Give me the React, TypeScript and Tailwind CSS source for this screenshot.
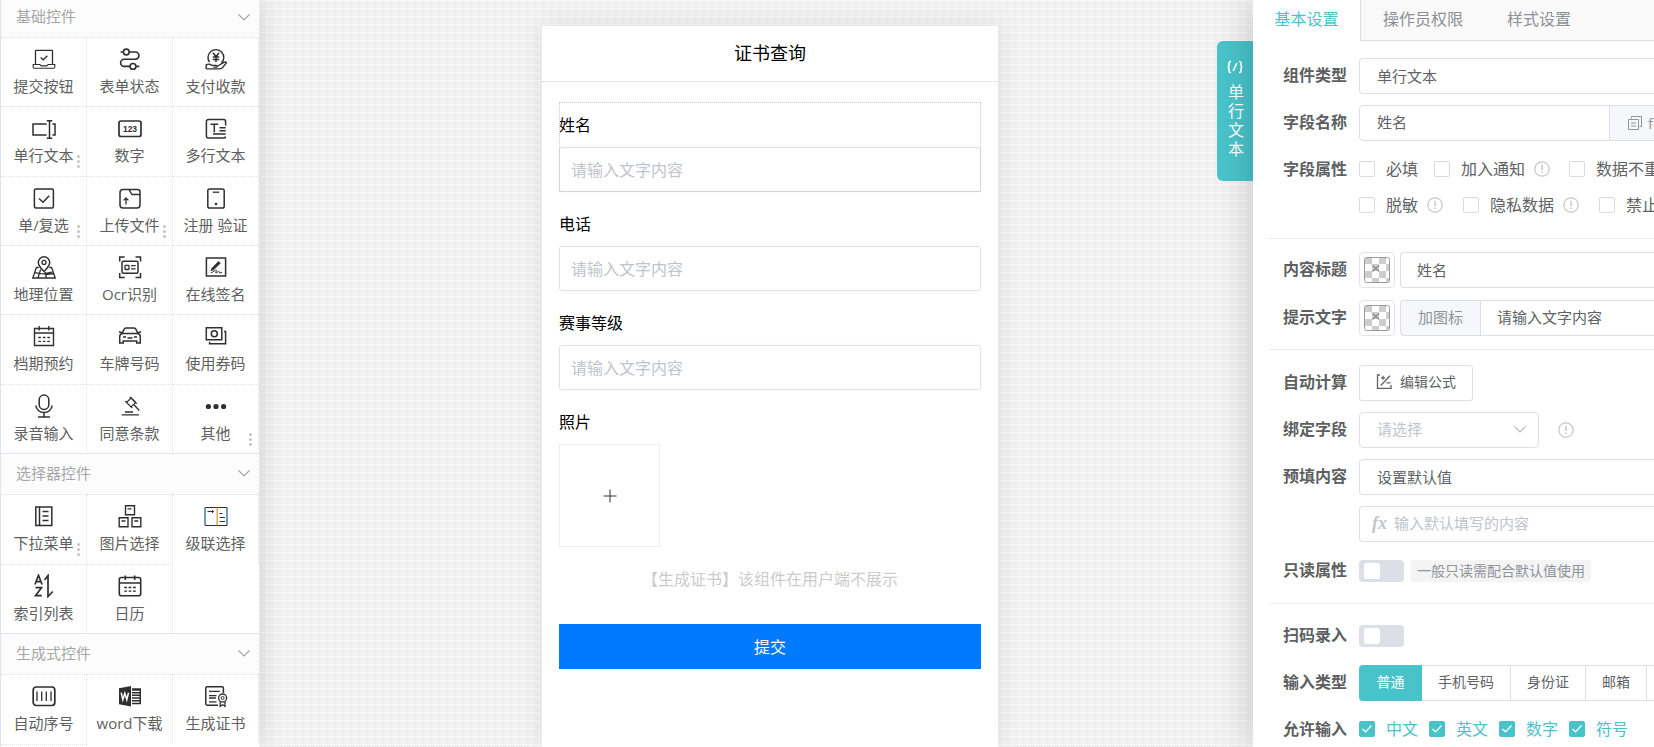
import type { ReactNode } from "react";

type Tool = { label: string; icon: ReactNode; more?: boolean };

function Glyph({ children, fill = false }: { children: ReactNode; fill?: boolean }) {
  return (
    <svg
      viewBox="0 0 24 24"
      className="h-6 w-6 text-[#2f2f2f]"
      fill={fill ? "currentColor" : "none"}
      stroke={fill ? "none" : "currentColor"}
      strokeWidth="1.3"
      aria-hidden="true"
    >
      {children}
    </svg>
  );
}

const basicTools: Tool[] = [
  {
    label: "提交按钮",
    icon: (
      <Glyph>
        <path d="M3.500 17V4.200a.9.9 0 0 1 .9-.9h15.200a.9.9 0 0 1 .9.9V17" />
        <path d="M1.200 17.500h6.600l1.400 1.400h5.600l1.400-1.400h6.600v2.600a1.200 1.200 0 0 1-1.200 1.200H2.400a1.200 1.200 0 0 1-1.200-1.200z" strokeWidth="1.1" />
        <path d="m8.600 10.600 2.600 2.200 4.200-4" />
      </Glyph>
    ),
  },
  {
    label: "表单状态",
    icon: (
      <Glyph>
        <circle cx="8.3" cy="5" r="2.900" strokeWidth="1.600" />
        <circle cx="15" cy="19.400" r="2.900" strokeWidth="1.600" />
        <path d="M2.600 5h2.800M11.200 5h6.200a3.600 3.600 0 0 1 0 7.200H6.200a3.600 3.600 0 0 0 0 7.200h5.900M17.900 19.400h3.400" strokeWidth="1.600" />
      </Glyph>
    ),
  },
  {
    label: "支付收款",
    icon: (
      <Glyph>
        <path d="M5.500 15.200a7.900 7.900 0 1 1 12 .9" strokeWidth="1.400" />
        <path d="m9 5.800 3 3.900 3-3.900M12 9.700v5.200M8.800 10h6.400M8.800 12.400h6.400" strokeWidth="1.500" />
        <path d="M2.200 22v-4.200c2.300-1.200 4-.7 5.600.6h4.300c1.500 0 1.500 1.700 0 1.700H9.300M13.800 19l6-3.600c1.700-1 3.200-.2 2.200 1L18.400 20.700c-1 .9-1.700 1.200-3 1.200H2.200" strokeWidth="1.400" />
      </Glyph>
    ),
  },
  {
    label: "单行文本",
    more: true,
    icon: (
      <Glyph>
        <path d="M14.600 8H1v11h13.600M20.400 8h2.600v11h-2.600" strokeWidth="1.500" />
        <path d="M17.500 5v17M14.800 4.800h5.400M14.800 22.200h5.400" strokeWidth="1.500" />
      </Glyph>
    ),
  },
  {
    label: "数字",
    icon: (
      <Glyph>
        <rect x="1" y="5" width="22" height="15.500" rx="2" strokeWidth="1.700" />
        <text x="12" y="15.800" textAnchor="middle" fontSize="8.500" fontWeight="700" fontFamily="Liberation Sans, sans-serif" fill="currentColor" stroke="none">
          123
        </text>
      </Glyph>
    ),
  },
  {
    label: "多行文本",
    icon: (
      <Glyph>
        <path d="M21.600 9.500V5.500a2 2 0 0 0-2-2H4.400a2 2 0 0 0-2 2v14.600a2 2 0 0 0 2 2h15.200a2 2 0 0 0 2-1.600" strokeWidth="1.500" />
        <path d="M6.500 8.200h7.600M10.300 8.200v8M15.500 11.800h6.200M15.500 14.800h6.200M9 18h12.700" strokeWidth="1.500" />
      </Glyph>
    ),
  },
  {
    label: "单/复选",
    more: true,
    icon: (
      <Glyph>
        <rect x="2.400" y="3" width="19" height="19" rx="1.500" strokeWidth="1.500" />
        <path d="m7 12.500 4 3.800 6.200-6.500" strokeWidth="1.500" />
      </Glyph>
    ),
  },
  {
    label: "上传文件",
    more: true,
    icon: (
      <Glyph>
        <path d="M11.500 3.600H5a3 3 0 0 0-3 3V19a3 3 0 0 0 3 3h14a3 3 0 0 0 3-3V8.400M11.500 3.600h8a2.500 2.500 0 0 1 2.500 2.500v2.300h-7.800c-1.500 0-1.900-4.800-4-4.800" strokeWidth="1.500" />
        <path d="M8 18.500v-6M5.600 14.400 8 12l2.400 2.400" />
      </Glyph>
    ),
  },
  {
    label: "注册 验证",
    icon: (
      <Glyph>
        <rect x="3.800" y="3" width="16.400" height="19" rx="1.800" strokeWidth="1.500" />
        <path d="M8.800 6.200h6.400" />
        <circle cx="12" cy="18" r="1.300" fill="currentColor" stroke="none" />
      </Glyph>
    ),
  },
  {
    label: "地理位置",
    icon: (
      <Glyph>
        <path d="M12 16.600C8.500 13 6.300 10.500 6.300 7.500a5.700 5.700 0 0 1 11.400 0c0 3-2.200 5.500-5.700 9.100z" strokeWidth="1.500" />
        <circle cx="12" cy="7.400" r="2" />
        <path d="M6.800 12.500H4.400L.8 23h22.400l-3.600-10.500h-2.400M2.600 17.600l6.400 1 3 .2 9.400-2.200M8.600 14.500 6 23M13 17l1.500 6M14.300 19.500l7-1" />
      </Glyph>
    ),
  },
  {
    label: "Ocr识别",
    icon: (
      <Glyph>
        <path d="M1.700 6.500V2h5M17.500 2h5v4.500M22.500 18v4.500h-5M6.700 22.500h-5V18" strokeWidth="1.500" />
        <rect x="4" y="6.300" width="16" height="12" rx="1.500" strokeWidth="1.500" />
        <rect x="7" y="10.300" width="4" height="4.200" rx=".5" />
        <path d="M13 10.600h4.600M13 13.800h4.600" />
      </Glyph>
    ),
  },
  {
    label: "在线签名",
    icon: (
      <Glyph>
        <rect x="2.400" y="3" width="19.200" height="18" strokeWidth="1.500" />
        <path d="m8 13.300 6.500-6.800 1.800 1.700-6.800 6.600-2.500.8z" fill="currentColor" strokeWidth=".8" />
        <path d="M7 17.500c2 .3 4.500-3 5.300-2.300s-1.300 2.700-.3 2.700 2-1.700 2.900-1.500-.4 1.300.6 1.400 1.500-.5 2.500-.5" strokeWidth="1" />
      </Glyph>
    ),
  },
  {
    label: "档期预约",
    icon: (
      <Glyph>
        <path d="M2.500 4.500h19v17h-19zM2.500 9h19M7.200 2v4.500M16.800 2v4.500" strokeWidth="1.400" />
        <path d="M6.300 13.500h2.600M10.800 13.500h2.600M15.300 13.500h2.600M6.300 17.300h2.600M10.800 17.300h2.600M15.300 17.300h2.600" />
      </Glyph>
    ),
  },
  {
    label: "车牌号码",
    icon: (
      <Glyph>
        <path d="M3.800 10 6 5.400c.4-.9 1-1.300 2-1.300h8c1 0 1.600.4 2 1.300l2.200 4.600M1 7.800l3 .9M23 7.800l-3 .9" strokeWidth="1.500" />
        <path d="M1.700 19V13c0-2 1.200-3.400 3.200-3.400h14.200c2 0 3.200 1.400 3.200 3.400v6h-3.600v-2H5.300v2z" strokeWidth="1.500" />
        <path d="M5 13h3M16 13h3M9.500 14h5" />
      </Glyph>
    ),
  },
  {
    label: "使用券码",
    icon: (
      <Glyph>
        <path d="M2.300 3.800h15.500v12H2.300z" strokeWidth="1.500" />
        <circle cx="10.300" cy="9.800" r="3" strokeWidth="1.500" />
        <path d="M20 7.500h1.600v12.300H5.600v-2" strokeWidth="1.500" />
      </Glyph>
    ),
  },
  {
    label: "录音输入",
    icon: (
      <Glyph>
        <rect x="7.200" y="1" width="9.600" height="14.500" rx="4.800" strokeWidth="1.500" />
        <path d="M4 11.500a8 7 0 0 0 16 0M12 18.500v4.500M6 23h12" strokeWidth="1.500" />
      </Glyph>
    ),
  },
  {
    label: "同意条款",
    icon: (
      <Glyph>
        <path d="m8.500 8.500 4.700-4.700 4.500 4.500-4.700 4.700zM11.700 2.800l7 7M7.300 7.200l7 7" strokeWidth="1.200" />
        <path d="m15.700 10.500 5.600 6M3.800 20.800h17M7 18h8" />
      </Glyph>
    ),
  },
  {
    label: "其他",
    more: true,
    icon: (
      <Glyph fill>
        <circle cx="4.400" cy="12.500" r="2.600" />
        <circle cx="12" cy="12.500" r="2.600" />
        <circle cx="19.600" cy="12.500" r="2.600" />
      </Glyph>
    ),
  },
];

const selectorTools: Tool[] = [
  {
    label: "下拉菜单",
    more: true,
    icon: (
      <Glyph>
        <path d="M3.800 3h16v18.500h-16zM7.500 3v18.500M10.500 7.500h6M10.500 12h6M10.500 16.500h6" strokeWidth="1.500" />
      </Glyph>
    ),
  },
  {
    label: "图片选择",
    icon: (
      <Glyph>
        <path d="M7.500 1.800h9v9h-9zM1.200 13.800h8.800v9H1.200zM14 13.800h8.800v9H14z" strokeWidth="1.400" />
        <path d="M9.500 4.800h4M3.500 17h4M16.300 17h4" />
      </Glyph>
    ),
  },
  {
    label: "级联选择",
    icon: (
      <Glyph>
        <path d="M1 3.500h22v18H1z" strokeWidth="1" />
        <path d="M13.200 3.500v18" stroke="#e09a35" strokeWidth="1.300" />
        <path d="M1 3.500v18M23 3.500v18" stroke="#4b9fd8" strokeWidth="1" />
        <path d="M3.500 7.500h6M8 6l1.600 1.500L8 9M15.500 9.500h3M15.500 13.500h5.500M15.500 17.500h5.500" strokeWidth="1" />
      </Glyph>
    ),
  },
  {
    label: "索引列表",
    icon: (
      <Glyph>
        <path d="m3 10.500 3.500-9.200L10 10.500M4.200 7.600h4.600M3.500 13.700h6l-6 8h6.300" strokeWidth="1.700" />
        <path d="M12.500 6 16 1.600V22.500l4.800-5" strokeWidth="1.700" />
      </Glyph>
    ),
  },
  {
    label: "日历",
    icon: (
      <Glyph>
        <rect x="1.300" y="3.500" width="21.400" height="18.300" rx="2" strokeWidth="1.600" />
        <path d="M1.300 9h21.400M7.300 1.500v4.500M16.700 1.500v4.500" strokeWidth="1.600" />
        <path d="M6.200 13.500h2.800M10.600 13.500h2.800M15 13.500h2.800M6.200 17.200h2.800M10.600 17.200h2.800M15 17.200h2.800" />
      </Glyph>
    ),
  },
];

const generatedTools: Tool[] = [
  {
    label: "自动序号",
    icon: (
      <Glyph>
        <rect x="1.200" y="3" width="21.600" height="18.500" rx="3" strokeWidth="1.700" />
        <path d="M5 7.500v9.500M9.700 7.500v9.500M14.300 7.500v9.500M19 7.500v9.500" strokeWidth="1.300" />
      </Glyph>
    ),
  },
  {
    label: "word下载",
    icon: (
      <Glyph fill>
        <path d="M1 4.200 13 2v20.500L1 20.300z" />
        <path d="M14 4.200h9v16h-9v-1.500h7.500v-1.200H14V16h7.500v-1.200H14v-1.500h7.500v-1.200H14v-1.500h7.500V9.400H14V7.900h7.500V6.700H14z" />
        <path d="m3.200 8.700 1.600 7 2-6.500 2 6.500 1.700-7" fill="none" stroke="#fff" strokeWidth="1.500" />
      </Glyph>
    ),
  },
  {
    label: "生成证书",
    icon: (
      <Glyph>
        <path d="M19.400 9V4.200a1.400 1.400 0 0 0-1.400-1.400H3.200a1.400 1.400 0 0 0-1.400 1.400v15.600a1.400 1.400 0 0 0 1.400 1.400H14" strokeWidth="1.500" />
        <path d="M5 7.400h10.800M5 11.600h7.500M5 14h7M5 17.800h7.500" />
        <circle cx="18.600" cy="14" r="4" />
        <circle cx="18.600" cy="14" r="1.500" strokeWidth="1" />
        <path d="M16.200 17.300v5l2.400-1.500 2.400 1.500v-5" />
      </Glyph>
    ),
  },
];

function Chevron({ className }: { className: string }) {
  return (
    <svg viewBox="0 0 14 14" className={className} fill="none" stroke="currentColor" strokeWidth="1.200" aria-hidden="true">
      <path d="m1.500 4.500 5.500 5.500L12.500 4.500" />
    </svg>
  );
}

function SectionHeader({ title, first = false }: { title: string; first?: boolean }) {
  return (
    <button
      type="button"
      className={
        first
          ? "flex h-[37px] w-full items-center justify-between bg-[#fcfcfc] pr-2 pb-1 pl-[15px] text-[15px] text-[#a6a6a6]"
          : "flex h-[41px] w-full items-center justify-between border-t border-[#e2e5ee] bg-[#fcfcfc] pr-2 pb-0.5 pl-[15px] text-[15px] text-[#a6a6a6]"
      }
    >
      {title}
      <Chevron className="h-3.5 w-3.5" />
    </button>
  );
}

function ToolCell({ tool }: { tool: Tool }) {
  return (
    <button
      type="button"
      className="relative flex flex-col items-center gap-[3px] border-t border-r border-dotted border-[#e2e2e2] pt-[9px] text-[15px] leading-6 whitespace-nowrap text-[#606060]"
    >
      {tool.icon}
      <span>{tool.label}</span>
      {tool.more && (
        <span className="absolute top-12 right-1.5 flex flex-col gap-0.5">
          <i className="h-[3px] w-[3px] rounded-full bg-[#c4c4c4]" />
          <i className="h-[3px] w-[3px] rounded-full bg-[#c4c4c4]" />
          <i className="h-[3px] w-[3px] rounded-full bg-[#c4c4c4]" />
        </span>
      )}
    </button>
  );
}

function Sidebar() {
  return (
    <aside className="relative z-10 w-[259px] shrink-0 overflow-hidden border-l border-[#dfe3f0] bg-white shadow-[0_0_24px_rgba(0,0,0,0.14)]">
      <SectionHeader title="基础控件" first />
      <div className="grid min-h-[416px] auto-rows-fr grid-cols-3">
        {basicTools.map((t) => (
          <ToolCell key={t.label} tool={t} />
        ))}
      </div>
      <SectionHeader title="选择器控件" />
      <div className="grid min-h-[139px] auto-rows-fr grid-cols-3">
        {selectorTools.map((t) => (
          <ToolCell key={t.label} tool={t} />
        ))}
      </div>
      <SectionHeader title="生成式控件" />
      <div className="grid min-h-[140px] auto-rows-fr grid-cols-3">
        {generatedTools.map((t) => (
          <ToolCell key={t.label} tool={t} />
        ))}
        <div className="border-t border-r border-dotted border-[#e2e2e2]" />
      </div>
    </aside>
  );
}

function FormField({ id, label, active = false }: { id: string; label: string; active?: boolean }) {
  return (
    <div className={active ? "outline-1 -outline-offset-1 outline-dotted outline-[#c8c8c8]" : ""}>
      <label htmlFor={id} className="flex h-[45px] items-center text-base text-black">
        {label}
      </label>
      <input
        id={id}
        placeholder="请输入文字内容"
        className="block h-[45px] w-full rounded-[3px] border border-[#e0e2ea] bg-white px-[11px] text-base text-[#606266] shadow-[0_0_5px_rgba(0,0,0,0.03)] outline-none placeholder:text-[#c0c4cc]"
      />
    </div>
  );
}

function Canvas() {
  return (
    <main className="flex min-w-0 flex-1 justify-center overflow-hidden bg-[#f0f0f0] bg-[linear-gradient(#f8f8f8_1px,transparent_1px),linear-gradient(90deg,#f8f8f8_1px,transparent_1px)] bg-size-[8px_8px] pt-[26px] pl-7">
      <section className="h-full w-[456px] bg-white shadow-[0_0_24px_rgba(0,0,0,0.09)]">
        <h1 className="flex h-14 items-center justify-center border-b border-dotted border-[#d4d4d4] pb-0.5 text-lg text-black">
          证书查询
        </h1>
        <form className="flex flex-col px-[17px] pt-5">
          <div className="flex flex-col gap-[9px]">
            <FormField id="name" label="姓名" active />
            <FormField id="phone" label="电话" />
            <FormField id="level" label="赛事等级" />
            <div>
              <p className="flex h-[45px] items-center text-base text-black">照片</p>
              <button
                type="button"
                aria-label="上传照片"
                className="flex h-[103px] w-[101px] items-center justify-center border border-[#ededed] bg-white"
              >
                <svg viewBox="0 0 14 14" className="h-3.5 w-3.5" stroke="#333" strokeWidth="1" aria-hidden="true">
                  <path d="M.5 7h13M7 .5v13" />
                </svg>
              </button>
            </div>
          </div>
          <p className="mt-5 text-center text-base text-[#cbcbcb]">【生成证书】该组件在用户端不展示</p>
          <button type="button" className="mt-[33px] h-[45px] bg-[#007aff] text-base text-white">
            提交
          </button>
        </form>
      </section>
    </main>
  );
}

function Row({ label, children, htmlFor }: { label: string; children: ReactNode; htmlFor?: string }) {
  return (
    <div className="flex pl-[30px]">
      <label htmlFor={htmlFor} className="flex h-9 w-[76px] shrink-0 items-center pb-0.5 text-base font-bold whitespace-nowrap text-[#5d5f63]">
        {label}
      </label>
      <div className="min-w-0 flex-1">{children}</div>
    </div>
  );
}

function Info() {
  return (
    <svg viewBox="0 0 16 16" className="h-4 w-4 shrink-0" fill="none" stroke="#c6c6c6" strokeWidth="1.200" aria-hidden="true">
      <circle cx="8" cy="8" r="7.200" />
      <path d="M8 3.800v5.200M8 10.600v1.500" strokeWidth="1.500" />
    </svg>
  );
}

function Check({ label, checked = false, info = false }: { label: string; checked?: boolean; info?: boolean }) {
  return (
    <div className="flex shrink-0 items-center gap-[9px]">
      <label className={checked ? "flex items-center gap-[11px] text-base text-[#49c3ca]" : "flex items-center gap-[11px] text-base text-[#606266]"}>
        <span className="relative flex">
          <input
            type="checkbox"
            defaultChecked={checked}
            className="peer h-4 w-4 appearance-none rounded-[2px] border border-[#d8dbe4] bg-white checked:border-[#49c3ca] checked:bg-[#49c3ca]"
          />
          <svg viewBox="0 0 16 16" className="pointer-events-none absolute inset-0 hidden h-4 w-4 peer-checked:block" fill="none" stroke="#fff" strokeWidth="1.200" aria-hidden="true">
            <path d="m3.500 8 3 2.800 6-6.300" />
          </svg>
        </span>
        {label}
      </label>
      {info && <Info />}
    </div>
  );
}

function Swatch({ label }: { label: string }) {
  return (
    <button type="button" aria-label={label} className="flex h-9 w-9 shrink-0 items-center justify-center rounded border border-[#e2e4ea]">
      <svg viewBox="0 0 26 26" className="h-[26px] w-[26px]" aria-hidden="true">
        <rect x=".5" y=".5" width="25" height="25" rx="2" fill="#fff" />
        <path d="M1 1h7v6H1zM15 1h7v6h-7zM8 7h7v7H8zM22 7h3v7h-3zM1 14h7v7H1zM15 14h7v7h-7zM8 21h7v4H8zM22 21h3v4h-3z" fill="#cdcdcd" />
        <rect x=".5" y=".5" width="25" height="25" rx="2" fill="none" stroke="#9b9b9b" />
        <path d="m8.500 8.500 6.500 6m0-6-6.500 6" stroke="#8a8a8a" strokeWidth="1.200" />
      </svg>
    </button>
  );
}

function Toggle({ id }: { id: string }) {
  return (
    <input
      id={id}
      type="checkbox"
      role="switch"
      className="relative h-[22px] w-[45px] shrink-0 appearance-none rounded bg-[#dcdfe6] before:absolute before:top-[3px] before:left-[5px] before:h-4 before:w-4 before:rounded-[3px] before:bg-white checked:bg-[#49c3ca]"
    />
  );
}

const inputTypes = ["手机号码", "身份证", "邮箱"];
const allowed = ["中文", "英文", "数字", "符号"];

function Settings() {
  return (
    <aside className="relative z-10 flex w-[437px] shrink-0">
      <button
        type="button"
        className="mt-[41px] flex h-[140px] w-9 shrink-0 flex-col items-center gap-[9px] rounded-l-md bg-[#49c3ca] pt-[19px] text-white"
      >
        <svg viewBox="0 0 18 14" className="h-3.5 w-[18px]" fill="none" stroke="currentColor" strokeWidth="1.700" aria-hidden="true">
          <path d="M5 1.500H4.200C3 1.500 3 2.300 3 3.300v2C3 6.500 2.500 7 1.500 7 2.500 7 3 7.500 3 8.700v2c0 1 0 1.800 1.200 1.800H5M13 1.500h.8c1.200 0 1.200.8 1.200 1.800v2c0 1.200.5 1.700 1.500 1.700-1 0-1.500.5-1.500 1.700v2c0 1 0 1.800-1.200 1.800H13M10.800 3 7.200 11" />
        </svg>
        <span className="ml-0.5 w-4 text-base leading-[19px] break-all">单行文本</span>
      </button>
      <div className="flex-1 overflow-hidden bg-white shadow-[0_0_36px_rgba(0,0,0,0.2)]">
        <div className="flex h-[41px] text-base whitespace-nowrap">
          <button type="button" className="w-[107px] shrink-0 pb-[3px] text-[#49c3ca]">
            基本设置
          </button>
          <div className="flex flex-1 border-b border-l border-[#dcdfe6] bg-[#f9f9f9] pl-[22px] text-[#8d9096]">
            <button type="button" className="mr-11 pb-0.5">操作员权限</button>
            <button type="button" className="pb-0.5">样式设置</button>
          </div>
        </div>

        <div className="flex flex-col gap-[11px] pt-[17px]">
          <Row label="组件类型" htmlFor="kind">
            <input id="kind" defaultValue="单行文本" className="h-9 w-full rounded-l border border-r-0 border-[#dcdfe6] px-[17px] pb-0.5 text-[15px] text-[#606266] outline-none" />
          </Row>
          <Row label="字段名称" htmlFor="field">
            <div className="flex h-9">
              <input id="field" defaultValue="姓名" className="min-w-0 flex-1 rounded-l border border-[#dcdfe6] px-[17px] pb-0.5 text-[15px] text-[#606266] outline-none" />
              <button type="button" className="flex w-11 shrink-0 items-center gap-1.5 overflow-hidden border-y border-[#dcdfe6] bg-[#f5f7fa] pl-[18px] text-[15px] text-[#909399]">
                <svg viewBox="0 0 14 14" className="h-3.5 w-3.5 shrink-0" fill="none" stroke="currentColor" aria-hidden="true">
                  <path d="M3.500 2.500v-2h10v10h-2M.5 3.500h10v10H.5zM3 7h5M3 10h5" />
                </svg>
                fo
              </button>
            </div>
          </Row>
          <Row label="字段属性">
            <div className="flex h-9 items-center pb-0.5 whitespace-nowrap">
              <Check label="必填" />
              <span className="w-4 shrink-0" />
              <Check label="加入通知" info />
              <span className="w-[19px] shrink-0" />
              <Check label="数据不重" />
            </div>
            <div className="flex h-9 items-center gap-5 pb-0.5 whitespace-nowrap">
              <Check label="脱敏" info />
              <Check label="隐私数据" info />
              <Check label="禁止" />
            </div>
          </Row>
        </div>

        <div className="mt-[14px] ml-4 border-t border-[#ebebeb]" />

        <div className="flex flex-col gap-3 pt-[13px]">
          <Row label="内容标题" htmlFor="title">
            <div className="flex gap-[5px]">
              <Swatch label="标题颜色" />
              <input id="title" defaultValue="姓名" className="h-9 min-w-0 flex-1 rounded-l border border-r-0 border-[#dcdfe6] px-4 pb-0.5 text-[15px] text-[#606266] outline-none" />
            </div>
          </Row>
          <Row label="提示文字" htmlFor="hint">
            <div className="flex gap-[5px]">
              <Swatch label="提示颜色" />
              <div className="flex h-9 min-w-0 flex-1">
                <button type="button" className="w-20 shrink-0 rounded-l border border-r-0 border-[#dcdfe6] bg-[#f5f7fa] pb-0.5 text-[15px] text-[#909399]">
                  加图标
                </button>
                <input id="hint" defaultValue="请输入文字内容" className="min-w-0 flex-1 border border-r-0 border-[#dcdfe6] px-4 pb-0.5 text-[15px] text-[#606266] outline-none" />
              </div>
            </div>
          </Row>
        </div>

        <div className="mt-[13px] ml-4 border-t border-[#ebebeb]" />

        <div className="flex flex-col gap-[11px] pt-[15px]">
          <Row label="自动计算">
            <button type="button" className="flex h-9 items-center gap-2 rounded-[3px] border border-[#dcdfe6] px-4 pb-0.5 text-sm text-[#606266]">
              <svg viewBox="0 0 16 16" className="h-4 w-4" fill="none" stroke="currentColor" strokeWidth="1.300" aria-hidden="true">
                <path d="M4 1H1.500v13.300H15V11M4.800 11.500 14 1.700M5 3.800h4M7 1.800v4M10.500 8.800h4" />
              </svg>
              编辑公式
            </button>
          </Row>
          <Row label="绑定字段" htmlFor="bind">
            <div className="flex items-center gap-[19px]">
              <div className="relative">
                <select id="bind" className="h-9 w-[180px] appearance-none rounded border border-[#dcdfe6] bg-white px-[17px] pb-0.5 text-[15px] text-[#c0c4cc] outline-none">
                  <option>请选择</option>
                </select>
                <Chevron className="pointer-events-none absolute top-2.5 right-3 h-3.5 w-3.5 text-[#b4bac4]" />
              </div>
              <Info />
            </div>
          </Row>
          <Row label="预填内容" htmlFor="prefill">
            <div className="flex flex-col gap-[11px]">
              <input id="prefill" defaultValue="设置默认值" className="h-9 w-full rounded-l border border-r-0 border-[#dcdfe6] px-[17px] pb-0.5 text-[15px] text-[#606266] outline-none" />
              <div className="flex h-9 items-center gap-[7px] rounded-l border border-r-0 border-[#dcdfe6] pb-0.5 pl-3">
                <span className="font-['Liberation_Serif',serif] text-lg leading-none font-bold text-[#c0c4cc] italic">fx</span>
                <input aria-label="默认内容" placeholder="输入默认填写的内容" className="min-w-0 flex-1 text-[15px] outline-none placeholder:text-[#c0c4cc]" />
              </div>
            </div>
          </Row>
          <Row label="只读属性" htmlFor="readonly">
            <div className="flex h-9 items-center gap-[7px]">
              <Toggle id="readonly" />
              <span className="rounded bg-[#f4f4f5] px-1.5 text-sm leading-[22px] whitespace-nowrap text-[#909399]">一般只读需配合默认值使用</span>
            </div>
          </Row>
        </div>

        <div className="mt-[14px] ml-4 border-t border-[#ebebeb]" />

        <div className="flex flex-col gap-[11px] pt-[14px]">
          <Row label="扫码录入" htmlFor="scan">
            <div className="flex h-9 items-center">
              <Toggle id="scan" />
            </div>
          </Row>
          <Row label="输入类型">
            <div className="flex h-9 text-sm whitespace-nowrap text-[#606266]">
              <label className="flex w-[63px] shrink-0 items-center justify-center rounded-l bg-[#49c3ca] pb-0.5 text-white">
                <input type="radio" name="type" defaultChecked className="sr-only" />
                普通
              </label>
              {inputTypes.map((t) => (
                <label key={t} className="flex shrink-0 items-center border-y border-r border-[#dcdfe6] px-4 pb-0.5">
                  <input type="radio" name="type" className="sr-only" />
                  {t}
                </label>
              ))}
              <span className="flex-1 border-y border-[#dcdfe6]" />
            </div>
          </Row>
          <Row label="允许输入">
            <div className="flex h-9 items-center gap-[11px] pb-0.5">
              {allowed.map((t) => (
                <Check key={t} label={t} checked />
              ))}
            </div>
          </Row>
        </div>
      </div>
    </aside>
  );
}

export default function App() {
  return (
    <div className="flex h-screen overflow-hidden bg-white font-['Open_Sans','Noto_Sans_CJK_SC',sans-serif]">
      <Sidebar />
      <div className="relative flex min-w-0 flex-1">
        <Canvas />
        <div className="-ml-9 flex">
          <Settings />
        </div>
      </div>
    </div>
  );
}
